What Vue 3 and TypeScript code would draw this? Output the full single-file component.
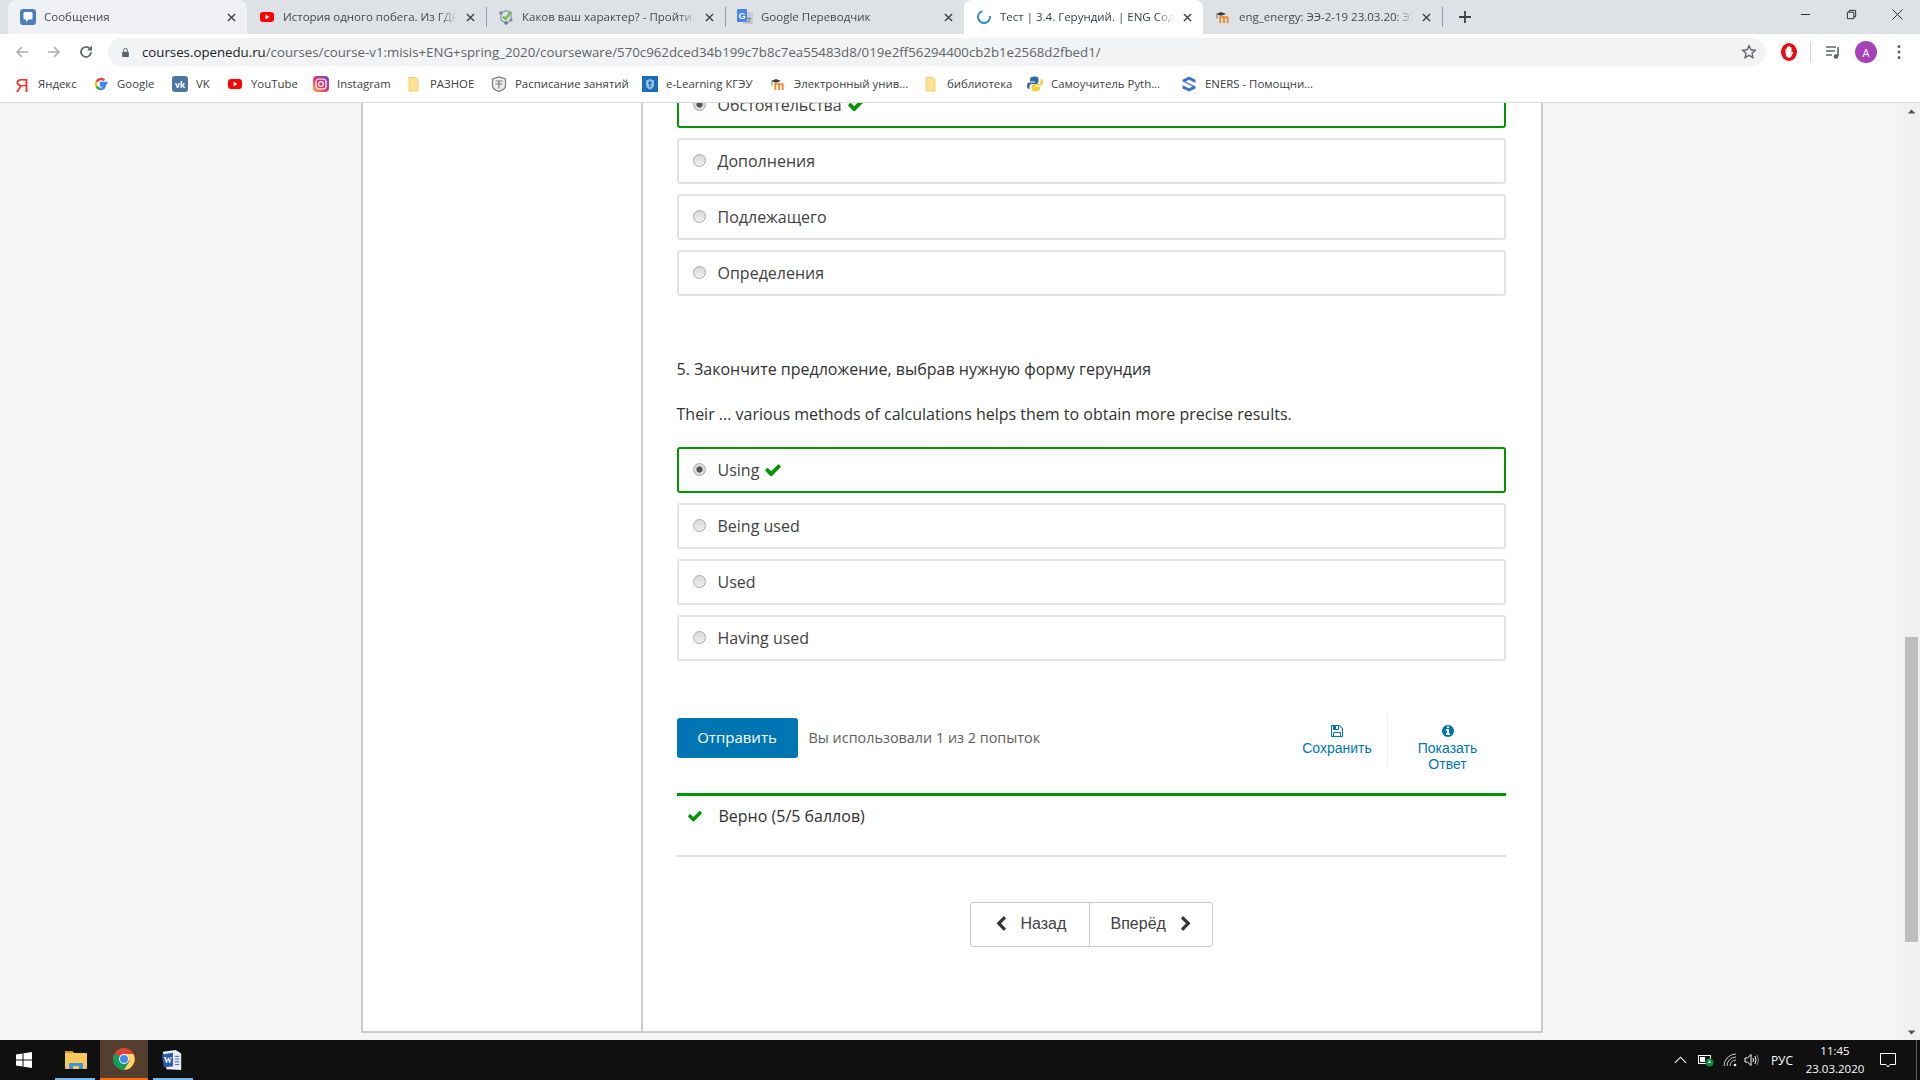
<script setup lang="ts">
const icons: Record<string, string> = {
  msg: '<rect x="0" y="0" width="16" height="16" rx="3" fill="#4d7fbf"/><path d="M3.500 4.500Q3.500 3 5 3h6q1.500 0 1.500 1.500v4.500q0 1.500-1.500 1.500H8.500L6 13v-2.500H5Q3.500 10.500 3.500 9z" fill="#fff"/>',
  yt: '<rect x="1" y="3" width="14" height="10" rx="3" fill="#f00"/><path d="M6.500 5.500l4 2.500-4 2.500z" fill="#fff"/>',
  test: '<path d="M3 4L8 1.500 13 4M3 4v7l5 3.500 5-3.500V4" fill="none" stroke="#8a9aa8" stroke-width="1.300"/><circle cx="3" cy="4" r="1.800" fill="#7d8d9b"/><circle cx="8" cy="14" r="1.800" fill="#5f7f9b"/><circle cx="13" cy="11" r="1.600" fill="#7d8d9b"/><path d="M5 7.500l2.500 2.500L13 2.500" fill="none" stroke="#6cbf4a" stroke-width="2.200"/>',
  tr: '<rect x="6" y="3" width="10" height="12" rx="1" fill="#c9ccd1"/><rect x="0" y="0" width="10" height="13" rx="1" fill="#4285f4"/><text x="5" y="10" font-size="9" font-weight="700" text-anchor="middle" fill="#fff" font-family="Liberation Sans">G</text><text x="12" y="13" font-size="6" text-anchor="middle" fill="#5f6368" font-family="Liberation Sans">文</text>',
  spin: '<circle cx="8" cy="8" r="6" fill="none" stroke="#2f8ccb" stroke-width="2" stroke-dasharray="27 11" transform="rotate(-10 8 8)"/>',
  moodle: '<text x="9" y="14" font-size="12" font-weight="700" text-anchor="middle" fill="#f98012" font-family="Liberation Sans">m</text><path d="M1 5l5-2 5 2-5 1.800z" fill="#3a3a3a"/><path d="M2 5.500v4" stroke="#555" stroke-width=".8"/>',
  ya: '<text x="8" y="15.500" font-size="19" text-anchor="middle" fill="#f2301f" font-family="Liberation Sans">Я</text>',
  g: '<path d="M14.500 7H8v2.500h3.800A4.300 4.300 0 0 1 8 13" fill="none" stroke="#4285f4" stroke-width="2.400"/><path d="M8 13a5 5 0 0 1-4.500-2.800" fill="none" stroke="#34a853" stroke-width="2.400"/><path d="M3.500 10.200a5 5 0 0 1 0-4.400" fill="none" stroke="#fbbc05" stroke-width="2.400"/><path d="M3.500 5.800A5 5 0 0 1 11.400 4.400" fill="none" stroke="#ea4335" stroke-width="2.400"/>',
  vk: '<rect x="0" y="0" width="16" height="16" rx="3" fill="#4c75a3"/><text x="8" y="11.500" font-size="9" font-weight="700" text-anchor="middle" fill="#fff" font-family="Liberation Sans">vk</text>',
  ig: '<defs><linearGradient id="igg" x1="0" y1="1" x2="1" y2="0"><stop offset="0" stop-color="#fdb04a"/><stop offset=".5" stop-color="#e1306c"/><stop offset="1" stop-color="#6a4fd0"/></linearGradient></defs><rect x="0" y="0" width="16" height="16" rx="4" fill="url(#igg)"/><rect x="3" y="3" width="10" height="10" rx="3" fill="none" stroke="#fff" stroke-width="1.200"/><circle cx="8" cy="8" r="2.300" fill="none" stroke="#fff" stroke-width="1.200"/>',
  folder: '<path d="M3 1.500h7l2 2v11.500H3z" fill="#fde293" stroke="#e8c766" stroke-width=".8"/>',
  shield: '<path d="M1.500 3L8 1l6.500 2v7q0 3-6.500 5.500Q1.500 13 1.500 10z" fill="#eee" stroke="#7d7d7d" stroke-width="1.200"/><path d="M4.500 5h7M8 5v7.500M4.500 8h7" stroke="#7d7d7d" stroke-width="1.200"/>',
  kgeu: '<rect x="0" y="0" width="16" height="16" fill="#1c6cb3"/><path d="M8 3l4 1.500v4Q12 12 8 13.500 4 12 4 8.500v-4z" fill="#8ec3ea"/><path d="M8 5v6M6 7h4" stroke="#1c5c96" stroke-width="1.200"/>',
  py: '<path d="M8 .5Q3 .5 3 3v2.500h5v1H2Q0 6.500 0 10q0 3 2.500 3V10.500q0-2.500 2.500-2.500h4q2.500 0 2.500-2.500V3Q11.500 .5 8 .5z" fill="#2f6ea5"/><path d="M8 15.500q5 0 5-2.500v-2.500H8v-1h6q2 0 2-3.500 0-3-2.500-3v2.500q0 2.500-2.500 2.500H7q-2.500 0-2.500 2.500V13q0 2.500 3.500 2.500z" fill="#f7cf3d"/>',
  eners: '<path d="M8 .5l6.500 3.200v3.300L8 3.800 4.500 5.800 14.500 10.500v2L8 15.500 1.500 12.500V9.200L8 12.300l3.500-1.900L1.500 5.500V3.700z" fill="#3b74c4"/>',
}

const tabs = [
  { icon: 'msg', title: 'Сообщения', cls: 'hover' },
  { icon: 'yt', title: 'История одного побега. Из ГДР в ФРГ', cls: 'sep' },
  { icon: 'test', title: 'Каков ваш характер? - Пройти онлайн тест', cls: 'sep' },
  { icon: 'tr', title: 'Google Переводчик', cls: '' },
  { icon: 'spin', title: 'Тест | 3.4. Герундий. | ENG Содержание', cls: 'active' },
  { icon: 'moodle', title: 'eng_energy: ЭЭ-2-19 23.03.20: ЭЭ-2-19', cls: 'sep' },
]

const bookmarks = [
  { icon: 'ya', text: 'Яндекс', w: 79 },
  { icon: 'g', text: 'Google', w: 79 },
  { icon: 'vk', text: 'VK', w: 55 },
  { icon: 'yt', text: 'YouTube', w: 86 },
  { icon: 'ig', text: 'Instagram', w: 93 },
  { icon: 'folder', text: 'РАЗНОЕ', w: 85 },
  { icon: 'shield', text: 'Расписание занятий', w: 151 },
  { icon: 'kgeu', text: 'e-Learning КГЭУ', w: 128 },
  { icon: 'moodle', text: 'Электронный унив...', w: 153 },
  { icon: 'folder', text: 'библиотека', w: 104 },
  { icon: 'py', text: 'Самоучитель Pyth...', w: 154 },
  { icon: 'eners', text: 'ENERS - Помощни...', w: 140 },
]

const firstGroup = ['Дополнения', 'Подлежащего', 'Определения']
const secondGroup = ['Being used', 'Used', 'Having used']
const checkPath = 'M1671 566q0 40-28 68l-724 724-136 136q-28 28-68 28t-68-28l-136-136-362-362q-28-28-28-68t28-68l136-136q28-28 68-28t68 28l294 295 656-657q28-28 68-28t68 28l136 136q28 28 28 68z'
</script>

<template>
  <div class="browser">
    <header class="tabstrip">
      <div v-for="t in tabs" :key="t.title" class="tab" :class="t.cls">
        <svg class="fav" viewBox="0 0 16 16" v-html="icons[t.icon]"></svg>
        <span class="tab-title">{{ t.title }}</span>
        <svg class="tab-close" viewBox="0 0 10 10"><path d="M1 1l8 8M9 1l-8 8" stroke="#3c4043" stroke-width="1.500" /></svg>
      </div>
      <svg class="newtab" viewBox="0 0 14 14"><path d="M7 1v12M1 7h12" stroke="#3c4043" stroke-width="1.800" /></svg>
      <div class="winctl">
        <div class="winbtn"><svg viewBox="0 0 12 12"><path d="M1 6h10" stroke="#222" /></svg></div>
        <div class="winbtn"><svg viewBox="0 0 12 12" fill="none"><path d="M1.500 3.500h7v7h-7zM3.500 3.500v-2h7v7h-2" stroke="#222" /></svg></div>
        <div class="winbtn"><svg viewBox="0 0 12 12"><path d="M.5.500l11 11M11.500.500l-11 11" stroke="#222" /></svg></div>
      </div>
    </header>

    <div class="toolbar">
      <svg class="nav-ic" viewBox="0 0 16 16" fill="none"><path d="M14 8H3M8 3L3 8l5 5" stroke="#a9acb0" stroke-width="1.600" /></svg>
      <svg class="nav-ic" viewBox="0 0 16 16" fill="none"><path d="M2 8h11M8 3l5 5-5 5" stroke="#a9acb0" stroke-width="1.600" /></svg>
      <svg class="nav-ic" viewBox="0 0 16 16" fill="none"><path d="M13 8a5 5 0 1 1-1.500-3.600" stroke="#5f6368" stroke-width="1.700" /><path d="M14 1.500v5h-5z" fill="#5f6368" /></svg>
      <div class="omnibox">
        <svg class="lock" viewBox="0 0 12 14"><path d="M3.500 6V4a2.500 2.500 0 0 1 5 0v2" fill="none" stroke="#5f6368" stroke-width="1.300" /><rect x="1.500" y="6" width="9" height="7" rx="1" fill="#5f6368" /></svg>
        <span class="url"><b class="domain">courses.openedu.ru</b>/courses/course-v1:misis+ENG+spring_2020/courseware/570c962dced34b199c7b8c7ea55483d8/019e2ff56294400cb2b1e2568d2fbed1/</span>
        <svg class="star" viewBox="0 0 16 16"><path d="M8 1.800l1.900 4 4.400.5-3.300 3 .9 4.300L8 11.400l-3.900 2.200.9-4.300-3.300-3 4.400-.5z" fill="none" stroke="#5f6368" stroke-width="1.400" /></svg>
      </div>
      <div class="tb-right">
        <svg class="opera" viewBox="0 0 18 20"><ellipse cx="9" cy="10" rx="8" ry="9" fill="#e40d12" /><path d="M5.500 10.500V7.500q0-1 .8-1t.7 1V5.500q0-1 .8-1t.7 1V5q0-1 .8-1t.8 1v.8q0-.8.7-.8t.7 1v4.500q.5-1 1.200-.8t.3 1.200L11 15q-.5.800-2 .8-2.500 0-3-2.300z" fill="#fff" /></svg>
        <i class="tb-sep"></i>
        <svg class="media" viewBox="0 0 16 16" fill="none"><path d="M1 3h10M1 7h9M1 11h6" stroke="#5f6368" stroke-width="1.400" /><path d="M13 3v9" stroke="#5f6368" stroke-width="1.600" /><circle cx="11" cy="12.500" r="2.300" fill="#5f6368" /></svg>
        <span class="avatar">A</span>
        <svg class="dots" viewBox="0 0 4 16"><circle cx="2" cy="2.500" r="1.500" fill="#5f6368" /><circle cx="2" cy="8" r="1.500" fill="#5f6368" /><circle cx="2" cy="13.500" r="1.500" fill="#5f6368" /></svg>
      </div>
    </div>

    <div class="bookmarks">
      <div v-for="b in bookmarks" :key="b.text" class="bm" :style="{ width: b.w + 'px' }">
        <svg class="fav" viewBox="0 0 16 16" v-html="icons[b.icon]"></svg>
        <span>{{ b.text }}</span>
      </div>
    </div>

    <div class="viewport">
      <div class="page">
        <div class="course">
          <aside class="sidebar"></aside>
          <main class="main">
            <div class="options">
              <div class="opt correct">
                <span class="radio on"></span><span>Обстоятельства</span>
                <svg class="check" viewBox="0 0 1792 1792"><path :d="checkPath" /></svg>
              </div>
              <div v-for="o in firstGroup" :key="o" class="opt">
                <span class="radio"></span><span>{{ o }}</span>
              </div>
            </div>

            <p class="q-title">5. Закончите предложение, выбрав нужную форму герундия</p>
            <p class="q-text">Their ... various methods of calculations helps them to obtain more precise results.</p>

            <div class="options">
              <div class="opt correct">
                <span class="radio on"></span><span>Using</span>
                <svg class="check" viewBox="0 0 1792 1792"><path :d="checkPath" /></svg>
              </div>
              <div v-for="o in secondGroup" :key="o" class="opt">
                <span class="radio"></span><span>{{ o }}</span>
              </div>
            </div>

            <div class="actions">
              <button class="submit">Отправить</button>
              <span class="attempts">Вы использовали 1 из 2 попыток</span>
              <div class="tools">
                <div class="tool save">
                  <svg viewBox="0 0 1792 1792"><path d="M512 1536h768v-384h-768v384zm896 0h128v-896q0-14-10-38.500t-20-34.500l-281-281q-10-10-34-20t-39-10v416q0 40-28 68t-68 28h-576q-40 0-68-28t-28-68v-416h-128v1280h128v-416q0-40 28-68t68-28h832q40 0 68 28t28 68v416zm-384-928v-320q0-13-9.500-22.500t-22.500-9.500h-192q-13 0-22.500 9.500t-9.500 22.500v320q0 13 9.500 22.500t22.500 9.500h192q13 0 22.500-9.500t9.500-22.500zm640 32v928q0 40-28 68t-68 28h-1344q-40 0-68-28t-28-68v-1344q0-40 28-68t68-28h928q40 0 88 20t76 48l280 280q28 28 48 76t20 88z" /></svg>
                  <span>Сохранить</span>
                </div>
                <div class="tool show">
                  <svg viewBox="0 0 1792 1792"><path d="M1152 1376v-160q0-14-9-23t-23-9h-96v-512q0-14-9-23t-23-9h-320q-14 0-23 9t-9 23v160q0 14 9 23t23 9h96v320h-96q-14 0-23 9t-9 23v160q0 14 9 23t23 9h448q14 0 23-9t9-23zm-128-896v-160q0-14-9-23t-23-9h-192q-14 0-23 9t-9 23v160q0 14 9 23t23 9h192q14 0 23-9t9-23zm640 416q0 209-103 385.500t-279.500 279.500-385.500 103-385.500-103-279.500-279.500-103-385.500 103-385.500 279.500-279.500 385.500-103 385.500 103 279.500 279.500 103 385.500z" /></svg>
                  <span>Показать<br />Ответ</span>
                </div>
              </div>
            </div>

            <div class="result">
              <svg class="res-check" viewBox="0 0 1792 1792"><path :d="checkPath" /></svg>
              <span>Верно (5/5 баллов)</span>
            </div>

            <nav class="pager">
              <div class="pg prev">
                <svg viewBox="0 0 1792 1792"><path d="M1427 301l-531 531 531 531q19 19 19 45t-19 45l-166 166q-19 19-45 19t-45-19l-742-742q-19-19-19-45t19-45l742-742q19-19 45-19t45 19l166 166q19 19 19 45t-19 45z" /></svg>
                <span>Назад</span>
              </div>
              <div class="pg next">
                <span>Вперёд</span>
                <svg viewBox="0 0 1792 1792"><path d="M1363 877l-742 742q-19 19-45 19t-45-19l-166-166q-19-19-19-45t19-45l531-531-531-531q-19-19-19-45t19-45l166-166q19-19 45-19t45 19l742 742q19 19 19 45t-19 45z" /></svg>
              </div>
            </nav>
          </main>
        </div>
      </div>
      <div class="scrollbar">
        <svg viewBox="0 0 10 6"><path d="M5 .500L9.500 5.500H.5z" fill="#505050" /></svg>
        <div class="track"><div class="thumb"></div></div>
        <svg viewBox="0 0 10 6"><path d="M5 5.500L9.500 .5H.5z" fill="#505050" /></svg>
      </div>
    </div>

    <footer class="taskbar">
      <div class="start">
        <svg viewBox="0 0 16 16"><path d="M0 2.500l6.500-1v6H0zM7.500 1.300L16 0v7.500H7.500zM0 8.500h6.500v6l-6.500-1zM7.500 8.500H16V16l-8.500-1.300z" fill="#fff" /></svg>
      </div>
      <div class="task running explorer">
        <svg viewBox="0 0 22 18"><path d="M0 1q0-1 1-1h6l2 2h12q1 0 1 1v14q0 1-1 1H1q-1 0-1-1z" fill="#f7c85c" /><path d="M0 1q0-1 1-1h6l2 2H0z" fill="#d99a1c" /><path d="M4 18v-6h14v6h-4v-3H8v3z" fill="#3f97d8" /></svg>
      </div>
      <div class="task active chrome">
        <svg viewBox="0 0 22 22"><circle cx="11" cy="11" r="11" fill="#db4437" /><path d="M11 11L1.500 5.500A11 11 0 0 0 11 22l5-8z" fill="#0f9d58" /><path d="M11 6h9.500A11 11 0 0 1 11 22l5-8a6 6 0 0 0-5-8z" fill="#fdd663" /><circle cx="11" cy="11" r="5" fill="#fff" /><circle cx="11" cy="11" r="4" fill="#4285f4" /></svg>
      </div>
      <div class="task running word">
        <svg viewBox="0 0 24 24"><path d="M2 3l14-2 6 4v18l-16-1z" fill="#e9eef7" /><path d="M1 6l12-2v15L3 20z" fill="#2a5caa" /><text x="7.500" y="15" font-size="9" font-weight="700" text-anchor="middle" fill="#fff" font-family="Liberation Serif">W</text><path d="M15 8h5M15 11h5M15 14h5M15 17h5" stroke="#2a5caa" /></svg>
      </div>
      <div class="tray">
        <svg class="t-chev" viewBox="0 0 14 8" fill="none"><path d="M1 7l6-6 6 6" stroke="#fff" stroke-width="1.200" /></svg>
        <svg class="t-bat" viewBox="0 0 16 14"><rect x=".5" y="2.500" width="12" height="8" fill="#111" stroke="#fff" /><rect x="2" y="4" width="5" height="5" fill="#fff" /><circle cx="11.500" cy="9.500" r="4" fill="#0b8a3e" /><path d="M11.500 7l-1.500 3h3z" fill="#fff" /></svg>
        <svg class="t-wifi" viewBox="0 0 14 14" fill="none"><path d="M1 13A12 12 0 0 1 13 1M4 13a9 9 0 0 1 9-9M7 13a6 6 0 0 1 6-6" stroke="#ddd" stroke-width=".9" /><circle cx="12" cy="12" r="1.300" fill="#fff" /></svg>
        <svg class="t-vol" viewBox="0 0 16 14" fill="none"><path d="M1 5h2.500L7 1.500v11L3.500 9H1z" stroke="#fff" /><path d="M9 5q1 2 0 4M11 3q2 4 0 8" stroke="#fff" /><path d="M13 1.500q3 5.500 0 11" stroke="#888" /></svg>
        <span class="lang">РУС</span>
        <div class="clock"><span>11:45</span><span>23.03.2020</span></div>
        <svg class="t-note" viewBox="0 0 16 16" fill="none"><path d="M.5 1.500h15v11h-5.500L8 15l-2-2.500H.5z" stroke="#fff" /></svg>
        <i class="t-desk"></i>
      </div>
    </footer>
  </div>
</template>

<style>
html,
body {
  margin: 0;
  background: #f5f5f5;
  overflow: hidden;
}
</style>

<style scoped>
.browser {
  width: 1920px;
  height: 1080px;
  display: flex;
  flex-direction: column;
  overflow: hidden;
  font-family: "Open Sans", "Liberation Sans", sans-serif;
}

/* tab strip */
.tabstrip {
  height: 34px;
  flex: none;
  display: flex;
  align-items: stretch;
  padding-left: 8px;
  background: #dee1e6;
}
.tab {
  width: 239px;
  flex: none;
  box-sizing: border-box;
  display: flex;
  align-items: center;
  padding: 0 11px 0 12px;
  position: relative;
  color: #45484c;
  font-size: 11.5px;
  line-height: 30px;
}
.tab.hover {
  background: #eef0f3;
  border-radius: 8px 8px 0 0;
}
.tab.active {
  background: #fff;
  border-radius: 8px 8px 0 0;
  color: #3c4043;
}
.tab.sep::after {
  content: "";
  position: absolute;
  right: -1px;
  top: 7px;
  bottom: 7px;
  width: 1px;
  background: #9aa0a6;
}
.fav {
  width: 16px;
  height: 16px;
  flex: none;
}
.tab-title {
  margin-left: 8px;
  flex: 1;
  min-width: 0;
  white-space: nowrap;
  overflow: hidden;
  -webkit-mask-image: linear-gradient(90deg, #000 90%, transparent 100%);
  mask-image: linear-gradient(90deg, #000 90%, transparent 100%);
}
.tab-close {
  width: 9px;
  height: 9px;
  margin-left: 9px;
  flex: none;
}
.newtab {
  width: 14px;
  height: 14px;
  margin: 10px 0 0 16px;
  flex: none;
}
.winctl {
  margin-left: auto;
  display: flex;
}
.winbtn {
  width: 46px;
  display: flex;
  justify-content: center;
  padding-top: 9px;
  box-sizing: border-box;
}
.winbtn svg {
  width: 11px;
  height: 11px;
}

/* toolbar */
.toolbar {
  height: 36px;
  flex: none;
  display: flex;
  align-items: center;
  background: #fff;
  padding-left: 14px;
  box-sizing: border-box;
}
.nav-ic {
  width: 16px;
  height: 16px;
  margin-right: 16px;
  flex: none;
}
.omnibox {
  width: 1658px;
  height: 28px;
  margin-left: -2px;
  background: #f1f3f4;
  border-radius: 14px;
  display: flex;
  align-items: center;
  flex: none;
  padding: 0 10px 0 13px;
  box-sizing: border-box;
}
.lock {
  width: 9px;
  height: 11px;
  flex: none;
}
.url {
  margin-left: 12px;
  font-size: 13.25px;
  color: #5f6368;
  white-space: nowrap;
}
.domain {
  font-weight: 400;
  color: #202124;
}
.star {
  width: 16px;
  height: 16px;
  margin-left: auto;
  margin-right: -1px;
}
.tb-right {
  display: flex;
  align-items: center;
  margin-left: 14px;
}
.opera {
  width: 18px;
  height: 20px;
}
.tb-sep {
  width: 1px;
  height: 20px;
  background: #d0d2d5;
  margin: 0 14px 0 12px;
}
.media {
  width: 16px;
  height: 16px;
}
.avatar {
  width: 22px;
  height: 22px;
  border-radius: 50%;
  background: #a642b8;
  color: #fff;
  font-size: 11px;
  display: flex;
  align-items: center;
  justify-content: center;
  margin-left: 14px;
}
.dots {
  width: 4px;
  height: 16px;
  margin-left: 20px;
}

/* bookmarks */
.bookmarks {
  height: 33px;
  flex: none;
  display: flex;
  align-items: center;
  box-sizing: border-box;
  padding: 0 0 5px 14px;
  background: #fff;
  border-bottom: 1px solid #d9d9d9;
  font-size: 11.4px;
  color: #3c4043;
}
.bm {
  flex: none;
  display: flex;
  align-items: center;
  white-space: nowrap;
}
.bm span {
  margin-left: 8px;
}

/* viewport */
.viewport {
  flex: 1;
  min-height: 0;
  display: flex;
  background: #f5f5f5;
  overflow: hidden;
}
.page {
  flex: 1;
  min-width: 0;
  overflow: hidden;
}
.course {
  width: 1182px;
  height: 930px;
  margin: 0 auto;
  box-sizing: border-box;
  display: flex;
  background: #fff;
  border: solid #ccc;
  border-width: 0 2px 2px;
  overflow: hidden;
}
.sidebar {
  width: 278px;
  flex: none;
  border-right: 2px solid #ccc;
}
.main {
  flex: 1;
  min-width: 0;
  padding: 0 35px 0 34px;
  margin-top: -21px;
  color: #414141;
  font-size: 16px;
}
.options {
  display: flex;
  flex-direction: column;
  gap: 10px;
}
.opt {
  height: 46px;
  box-sizing: border-box;
  display: flex;
  align-items: center;
  padding-left: 14px;
  border: 2px solid #e3e3e3;
  border-radius: 3px;
  background: #fff;
}
.opt.correct {
  border-color: #009600;
}
.radio {
  width: 13px;
  height: 13px;
  flex: none;
  margin: -1px 12px 0 0;
  box-sizing: border-box;
  border-radius: 50%;
  border: 1px solid #a8a8a8;
  background: linear-gradient(#d9d9d9, #efefef);
}
.radio.on {
  background: radial-gradient(circle, #555 0 2.800px, #dcdcdc 3.400px);
}
.check {
  width: 18px;
  height: 18px;
  margin-left: 5px;
  fill: #009600;
}
.q-title {
  margin: 61px 0 0;
  line-height: 24px;
  color: #313131;
  font-size: 16px;
}
.q-text {
  margin: 21px 0 21px;
  line-height: 24px;
  color: #313131;
}
.actions {
  margin-top: 52px;
  height: 80px;
  display: flex;
  align-items: flex-start;
}
.submit {
  width: 121px;
  height: 40px;
  margin-top: 5px;
  background: #0075b4;
  color: #fff;
  border: 0;
  border-radius: 3px;
  font-family: "Open Sans", "Liberation Sans", sans-serif;
  font-size: 15px;
  padding: 0 0 2px;
}
.attempts {
  margin: 15px 0 0 11px;
  font-size: 14.4px;
  line-height: 19px;
  color: #5e5e5e;
}
.tools {
  margin-left: auto;
  margin-right: -2px;
  display: flex;
  color: #0075b4;
  font-family: "Liberation Sans", sans-serif;
  font-size: 14px;
  line-height: 16px;
  text-align: center;
}
.tool {
  height: 54px;
  padding-top: 11px;
  box-sizing: border-box;
  display: flex;
  flex-direction: column;
  align-items: center;
}
.tool svg {
  width: 14px;
  height: 14px;
  fill: #0075b4;
  margin-bottom: 2px;
  flex: none;
}
.save {
  width: 100px;
  border-right: 1px solid #eee;
}
.show {
  width: 120px;
}
.result {
  height: 64px;
  box-sizing: border-box;
  border-top: 3px solid #009600;
  border-bottom: 2px solid #e0e0e0;
  display: flex;
  align-items: flex-start;
  padding: 8px 0 0 10px;
  color: #313131;
  line-height: 24px;
}
.res-check {
  width: 16px;
  height: 16px;
  margin: 4px 16px 0 0;
  fill: #009600;
}
.pager {
  margin-top: 45px;
  display: flex;
  justify-content: center;
  font-family: "Liberation Sans", sans-serif;
  font-size: 16px;
  color: #414141;
}
.pg {
  height: 45px;
  box-sizing: border-box;
  display: flex;
  align-items: center;
  border: 1px solid #c8c8c8;
  padding-bottom: 2px;
}
.pg svg {
  width: 16px;
  height: 16px;
  fill: #333;
}
.prev {
  width: 120px;
  padding-left: 22px;
  border-radius: 3px 0 0 3px;
}
.prev span {
  margin-left: 12px;
}
.next {
  width: 124px;
  padding-left: 21px;
  margin-left: -1px;
  border-radius: 0 3px 3px 0;
}
.next svg {
  margin-left: 12px;
}

/* scrollbar */
.scrollbar {
  width: 17px;
  flex: none;
  background: #f1f1f1;
  display: flex;
  flex-direction: column;
  align-items: center;
}
.scrollbar > svg {
  width: 9px;
  height: 5px;
  flex: none;
  margin: 6px 0 5px;
}
.track {
  flex: 1;
  width: 13px;
  position: relative;
}
.thumb {
  position: absolute;
  left: 0;
  right: 0;
  top: 518px;
  height: 305px;
  background: #bdbdbd;
}

/* taskbar */
.taskbar {
  height: 40px;
  flex: none;
  background: #101010;
  display: flex;
  align-items: stretch;
}
.start {
  width: 52px;
  flex: none;
  display: flex;
  align-items: center;
  justify-content: center;
  padding-right: 4px;
  box-sizing: border-box;
}
.start svg {
  width: 16px;
  height: 16px;
}
.task {
  width: 48px;
  flex: none;
  display: flex;
  align-items: center;
  justify-content: center;
  box-sizing: border-box;
  position: relative;
}
.task svg {
  width: 22px;
  height: 22px;
}
.task.running::after {
  content: "";
  position: absolute;
  left: 3px;
  right: 5px;
  bottom: 0;
  height: 2px;
  background: #76b9ed;
}
.task.word::after {
  left: 5px;
  right: 3px;
}
.task.active {
  background: #543e2e;
  border-bottom: 2px solid #f76d0a;
}
.tray {
  margin-left: auto;
  display: flex;
  align-items: center;
  color: #fff;
  font-size: 12px;
}
.tray svg {
  flex: none;
}
.t-chev {
  width: 13px;
  height: 8px;
  margin-right: 11px;
}
.t-bat {
  width: 16px;
  height: 14px;
  margin-right: 9px;
}
.t-wifi {
  width: 14px;
  height: 14px;
  margin-right: 7px;
}
.t-vol {
  width: 16px;
  height: 14px;
  margin-right: 10px;
}
.lang {
  width: 24px;
  text-align: center;
}
.clock {
  width: 66px;
  margin-left: 8px;
  display: flex;
  flex-direction: column;
  align-items: center;
  line-height: 18px;
  font-size: 11.5px;
}
.t-note {
  width: 16px;
  height: 16px;
  margin-left: 12px;
}
.t-desk {
  width: 1px;
  height: 40px;
  background: #5c5c5c;
  margin: 0 3px 0 20px;
}
</style>
